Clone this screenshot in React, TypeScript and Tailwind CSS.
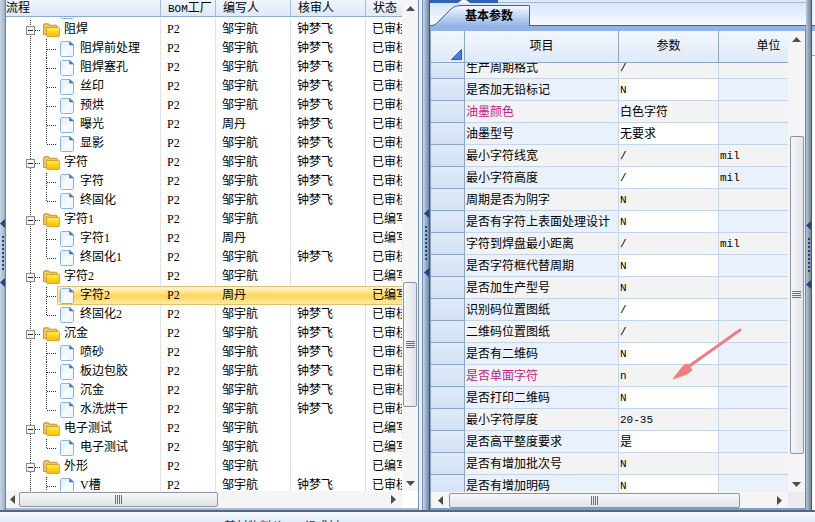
import { useState } from "react";
import clsx from "clsx";

type Kind = "folder" | "doc";

type ProcessRow = {
    id: number;
    kind: Kind;
    name: string;
    author: string;
    reviewer: string;
    status: string;
};

const ZOU = "邹宇航";
const ZHOU = "周丹";
const ZHONG = "钟梦飞";
const REVIEWED = "已审核";
const WRITTEN = "已编写";

const processData: [Kind, string, string, string, string][] = [
    ["folder", "阻焊", ZOU, ZHONG, REVIEWED],
    ["doc", "阻焊前处理", ZOU, ZHONG, REVIEWED],
    ["doc", "阻焊塞孔", ZOU, ZHONG, REVIEWED],
    ["doc", "丝印", ZOU, ZHONG, REVIEWED],
    ["doc", "预烘", ZOU, ZHONG, REVIEWED],
    ["doc", "曝光", ZHOU, ZHONG, REVIEWED],
    ["doc", "显影", ZOU, ZHONG, REVIEWED],
    ["folder", "字符", ZOU, ZHONG, REVIEWED],
    ["doc", "字符", ZOU, ZHONG, REVIEWED],
    ["doc", "终固化", ZOU, ZHONG, REVIEWED],
    ["folder", "字符1", ZOU, "", WRITTEN],
    ["doc", "字符1", ZHOU, "", WRITTEN],
    ["doc", "终固化1", ZOU, ZHONG, REVIEWED],
    ["folder", "字符2", ZOU, "", WRITTEN],
    ["doc", "字符2", ZHOU, "", WRITTEN],
    ["doc", "终固化2", ZOU, ZHONG, REVIEWED],
    ["folder", "沉金", ZOU, ZHONG, REVIEWED],
    ["doc", "喷砂", ZOU, ZHONG, REVIEWED],
    ["doc", "板边包胶", ZOU, ZHONG, REVIEWED],
    ["doc", "沉金", ZOU, ZHONG, REVIEWED],
    ["doc", "水洗烘干", ZOU, ZHONG, REVIEWED],
    ["folder", "电子测试", ZOU, "", WRITTEN],
    ["doc", "电子测试", ZOU, "", WRITTEN],
    ["folder", "外形", ZOU, "", WRITTEN],
    ["doc", "V槽", ZOU, ZHONG, REVIEWED],
];

const processRows: ProcessRow[] = processData.map(([kind, name, author, reviewer, status], id) => ({
    id,
    kind,
    name,
    author,
    reviewer,
    status,
}));

const params = [
    { name: "生产周期格式", value: "/", unit: "" },
    { name: "是否加无铅标记", value: "N", unit: "" },
    { name: "油墨颜色", value: "白色字符", unit: "", changed: true },
    { name: "油墨型号", value: "无要求", unit: "" },
    { name: "最小字符线宽", value: "/", unit: "mil" },
    { name: "最小字符高度", value: "/", unit: "mil" },
    { name: "周期是否为阴字", value: "N", unit: "" },
    { name: "是否有字符上表面处理设计", value: "N", unit: "" },
    { name: "字符到焊盘最小距离", value: "/", unit: "mil" },
    { name: "是否字符框代替周期", value: "N", unit: "" },
    { name: "是否加生产型号", value: "N", unit: "" },
    { name: "识别码位置图纸", value: "/", unit: "" },
    { name: "二维码位置图纸", value: "/", unit: "" },
    { name: "是否有二维码", value: "N", unit: "" },
    { name: "是否单面字符", value: "n", unit: "", changed: true },
    { name: "是否打印二维码", value: "N", unit: "" },
    { name: "最小字符厚度", value: "20-35", unit: "" },
    { name: "是否高平整度要求", value: "是", unit: "" },
    { name: "是否有增加批次号", value: "N", unit: "" },
    { name: "是否有增加明码", value: "N", unit: "" },
];

function FolderIcon() {
    return (
        <svg width="17" height="14" viewBox="0 0 17 14" className="shrink-0">
            <defs>
                <linearGradient id="folder-front" x1="0" y1="0" x2="0" y2="1">
                    <stop offset="0" stopColor="#fff04a" />
                    <stop offset="1" stopColor="#fdb900" />
                </linearGradient>
            </defs>
            <path d="M0.500 11.500V2L1.500 0.700h4L7 2.200h6.500L14.500 3.500v8z" fill="#e6b04a" stroke="#b98a35" strokeWidth="0.8" />
            <path d="M2 11V2.500h3L6.500 4h7" fill="none" stroke="#f8d98b" strokeWidth="0.9" />
            <rect x="3.500" y="4.500" width="13" height="9" rx="0.800" fill="url(#folder-front)" stroke="#d29a14" strokeWidth="0.8" />
        </svg>
    );
}

function DocIcon() {
    return (
        <svg width="14" height="16" viewBox="0 0 14 16" className="shrink-0">
            <defs>
                <linearGradient id="doc-sheet" x1="0" y1="0" x2="1" y2="1">
                    <stop offset="0" stopColor="#ddecfb" />
                    <stop offset="0.6" stopColor="#f8fcff" />
                    <stop offset="1" stopColor="#e6f2fd" />
                </linearGradient>
            </defs>
            <path d="M1.500 0.500h8.500l3.500 3.500v10.500l-1 1h-11l-1-1v-13z" fill="url(#doc-sheet)" stroke="#8ab4e6" />
            <path d="M9.500 0.500v3.500h4z" fill="#3b79c9" stroke="#3b79c9" strokeWidth="0.6" />
        </svg>
    );
}

// Dotted connector lines of one row; `odd` keeps the dots in step across 19px rows.
function Guides({ kind, odd, isFirst, isLast, collapsed }: { kind: Kind; odd: boolean; isFirst?: boolean; isLast?: boolean; collapsed?: boolean }) {
    const dash = { stroke: "#333", strokeDasharray: "1 1", strokeDashoffset: odd ? 1 : 0 };

    if (kind === "folder") {
        return (
            <svg width="37" height="19" viewBox="0 0 37 19" className="block shrink-0">
                <line x1="24.5" y1="0" x2="24.5" y2="19" {...dash} />
                <line x1="29" y1="10.5" x2="35" y2="10.5" stroke="#333" strokeDasharray="1 1" />
                <rect x="20.5" y="6.500" width="8" height="8" fill="#f4f4f4" stroke="#8b8b8b" />
                <path d={collapsed ? "M22 10.500h5M24.500 8v5" : "M22 10.500h5"} stroke="#222" />
            </svg>
        );
    }

    return (
        <svg width="51" height="19" viewBox="0 0 51 19" className="block shrink-0">
            <line x1="24.5" y1="0" x2="24.5" y2="19" {...dash} />
            <line x1="40.5" y1={isFirst ? -1 : 0} x2="40.5" y2={isLast ? 10 : 19} {...dash} />
            <line x1="41" y1="10.5" x2="50" y2="10.5" stroke="#333" strokeDasharray="1 1" />
        </svg>
    );
}

const arrowPaths = {
    up: "M4.500 2l4.500 5h-9z",
    down: "M4.500 7l4.500-5h-9z",
    left: "M2 4.500l5-4.500v9z",
    right: "M7 4.500l-5-4.500v9z",
};

function ScrollButton({ dir, label, width = "w-4" }: { dir: keyof typeof arrowPaths; label: string; width?: string }) {
    return (
        <button type="button" aria-label={label} className={clsx("flex h-4 shrink-0 items-center justify-center", width)}>
            <svg width="9" height="9" viewBox="0 0 9 9">
                <path d={arrowPaths[dir]} fill="#4d4d4d" />
            </svg>
        </button>
    );
}

function VerticalThumb() {
    return (
        <div className="flex h-full w-[14px] flex-col items-center justify-center gap-px rounded-xs border border-[#8e959f] bg-linear-to-r from-[#f6f7f9] to-[#dfe3ea]">
            {[0, 1, 2, 3].map((n) => (
                <span key={n} className="h-px w-[9px] bg-[#6d7178]" />
            ))}
        </div>
    );
}

function HorizontalThumb() {
    return (
        <div className="flex h-[15px] w-full items-center justify-center gap-px rounded-xs border border-[#8e959f] bg-linear-to-b from-[#f6f7f9] to-[#dfe3ea]">
            {[0, 1, 2, 3].map((n) => (
                <span key={n} className="h-[9px] w-px bg-[#6d7178]" />
            ))}
        </div>
    );
}

function Splitter({ className }: { className?: string }) {
    return (
        <div className={clsx("flex shrink-0 flex-col items-center justify-center gap-2", className)}>
            <svg width="5" height="9" viewBox="0 0 5 9">
                <path d="M5 0v9l-5-4.500z" fill="#24447e" />
            </svg>
            <div className="flex flex-col gap-0.5">
                {[0, 1, 2, 3, 4, 5, 6, 7, 8].map((n) => (
                    <span key={n} className="h-0.5 w-0.5 bg-[#24447e]" />
                ))}
            </div>
            <svg width="5" height="9" viewBox="0 0 5 9">
                <path d="M5 0v9l-5-4.500z" fill="#24447e" />
            </svg>
        </div>
    );
}

function ProcessPanel() {
    const [selected, setSelected] = useState(14);
    const [collapsed, setCollapsed] = useState<number[]>([]);

    const toggle = (id: number) =>
        setCollapsed((prev) => (prev.includes(id) ? prev.filter((n) => n !== id) : [...prev, id]));

    let parent = -1;
    const visible = processRows.filter((row) => {
        if (row.kind === "folder") {
            parent = row.id;
            return true;
        }
        return !collapsed.includes(parent);
    });

    const head = "h-[17px] border-b border-[#8fadd0] p-0 text-left font-normal";
    const headLine = "border-r border-r-[#a5bddb]";

    return (
        <section className="flex min-w-0 flex-[412] flex-col border-b-2 border-b-[#a9bbd6] bg-white">
            <div className="flex min-h-0 flex-1">
                <div className="min-w-0 flex-1 overflow-hidden">
                    <table className="w-[436px] table-fixed border-separate border-spacing-0 text-xs leading-[15px]">
                        <colgroup>
                            <col className="w-[155px]" />
                            <col className="w-[55px]" />
                            <col className="w-[75px]" />
                            <col className="w-[75px]" />
                            <col className="w-[76px]" />
                        </colgroup>
                        <thead className="bg-linear-to-b from-[#f0f6fe] to-[#dde8f7]">
                            <tr>
                                <th className={clsx(head, headLine)}>流程</th>
                                <th className={clsx(head, headLine, "pl-[7px] whitespace-nowrap")}>
                                    <span className="font-['Liberation_Mono',monospace] text-[11px] leading-none">BOM</span>工厂
                                </th>
                                <th className={clsx(head, headLine, "pl-[7px]")}>编写人</th>
                                <th className={clsx(head, headLine, "pl-[7px]")}>核审人</th>
                                <th className={clsx(head, "pl-[7px]")}>状态</th>
                            </tr>
                        </thead>
                        <tbody>
                            <tr aria-hidden="true">
                                <td className="border-r border-[#dfe3e8] p-0">
                                    <div className="flex h-[3px] items-end overflow-hidden pl-[54px]">
                                        <div className="pb-px">
                                            <DocIcon />
                                        </div>
                                    </div>
                                </td>
                                <td className="border-r border-[#dfe3e8] p-0" />
                                <td className="border-r border-[#dfe3e8] p-0" />
                                <td className="border-r border-[#dfe3e8] p-0" />
                                <td className="p-0" />
                            </tr>
                            {visible.map((row, i) => {
                                const active = row.id === selected;
                                const next = visible[i + 1];
                                const cell = clsx(
                                    "h-[19px] overflow-hidden py-0 pr-0 pl-1.5 whitespace-nowrap",
                                    active
                                        ? "border-y border-[#e3c070] bg-linear-to-b from-[#fff6d6] via-[#ffd557] to-[#ffeba0]"
                                        : "border-r border-[#dfe3e8]",
                                );

                                return (
                                    <tr key={row.id} aria-selected={active} onClick={() => setSelected(row.id)}>
                                        <td className={clsx("h-[19px] p-0", !active && "border-r border-[#dfe3e8]")}>
                                            <div className="flex h-[19px] items-center whitespace-nowrap">
                                                {row.kind === "folder" ? (
                                                    <button
                                                        type="button"
                                                        aria-label={`展开或折叠 ${row.name}`}
                                                        aria-expanded={!collapsed.includes(row.id)}
                                                        onClick={() => toggle(row.id)}
                                                    >
                                                        <Guides kind="folder" odd={i % 2 === 1} collapsed={collapsed.includes(row.id)} />
                                                    </button>
                                                ) : (
                                                    <Guides
                                                        kind="doc"
                                                        odd={i % 2 === 1}
                                                        isFirst={visible[i - 1]?.kind === "folder"}
                                                        isLast={next?.kind === "folder"}
                                                    />
                                                )}
                                                <div
                                                    className={clsx(
                                                        "flex h-[19px] flex-1 items-center",
                                                        row.kind === "folder" ? "gap-1" : "gap-1.5",
                                                        row.kind === "doc" && (active ? "pl-0.5" : "pl-[3px]"),
                                                        active &&
                                                            "rounded-l-xs border-y border-l border-[#e3c070] bg-linear-to-b from-[#fff6d6] via-[#ffd557] to-[#ffeba0]",
                                                    )}
                                                >
                                                    {row.kind === "folder" ? <FolderIcon /> : <DocIcon />}
                                                    <span>{row.name}</span>
                                                </div>
                                            </div>
                                        </td>
                                        <td className={cell}>P2</td>
                                        <td className={cell}>{row.author}</td>
                                        <td className={cell}>{row.reviewer}</td>
                                        <td className={clsx(cell, !active && "border-r-0")}>{row.status}</td>
                                    </tr>
                                );
                            })}
                        </tbody>
                    </table>
                </div>
                <div className="flex w-4 shrink-0 flex-col items-center bg-[#f5f5f6]">
                    <ScrollButton dir="up" label="向上滚动" />
                    <div className="flex-[265]" />
                    <div className="flex-[125]">
                        <VerticalThumb />
                    </div>
                    <div className="flex-[68]" />
                    <ScrollButton dir="down" label="向下滚动" />
                </div>
            </div>
            <div className="flex h-[17px] shrink-0 items-center bg-[#f5f5f6]">
                <ScrollButton dir="left" label="向左滚动" width="w-[13px]" />
                <div className="flex h-full min-w-0 flex-1 items-center">
                    <div className="flex-[199]">
                        <HorizontalThumb />
                    </div>
                    <div className="flex-[166]" />
                </div>
                <ScrollButton dir="right" label="向右滚动" width="w-[18px]" />
                <div className="h-full w-4 shrink-0 bg-white" />
            </div>
        </section>
    );
}

function ParameterGrid() {
    const head = "h-8 border-r border-b border-[#8ba6c6] p-0 text-center font-normal";
    const cell = "border-r border-b border-[#c3d5ed] py-0 pr-0 pl-px";
    const mono = "font-['Liberation_Mono','Noto_Sans_CJK_SC',monospace] text-[11px]";

    return (
        <div className="relative min-w-0 flex-1 overflow-hidden bg-[#e9f1fc]">
            <table className="w-[388px] table-fixed border-separate border-spacing-0 text-xs leading-[15px]">
                <colgroup>
                    <col className="w-[34px]" />
                    <col className="w-[154px]" />
                    <col className="w-[100px]" />
                    <col className="w-[100px]" />
                </colgroup>
                <thead className="bg-linear-to-b from-[#f2f7fe] to-[#deeaf8]">
                    <tr>
                        <th className={head} aria-label="全选">
                            <div className="flex h-[31px] items-end justify-end pr-0.5 pb-0.5">
                                <svg width="11" height="11" viewBox="0 0 11 11">
                                    <path d="M10.500 0.500v10h-10z" fill="#3f7fe0" stroke="#2a5caa" />
                                </svg>
                            </div>
                        </th>
                        <th className={head}>项目</th>
                        <th className={head}>参数</th>
                        <th className={head}>单位</th>
                    </tr>
                </thead>
                <tbody>
                    {params.map((param, i) => {
                        const shaded = i % 2 === 0;
                        // the first row is scrolled partly under the header
                        const box = clsx("flex flex-col justify-end overflow-hidden", i === 0 ? "h-[15px]" : "h-[21px]");
                        const text = "flex h-[21px] shrink-0 items-center pt-0.5 whitespace-nowrap";
                        const latin = /^[\x20-\x7e]+$/.test(param.value);

                        return (
                            <tr key={param.name}>
                                <td className="border-r border-b border-[#8ba6cc] bg-linear-to-b from-[#e0ebf8] to-[#d3e1f3] p-0" />
                                <td className={clsx(cell, shaded ? "bg-[#f3f3f3]" : "bg-[#e8f1fc]", param.changed && "text-[#c4208c]")}>
                                    <div className={box}>
                                        <span className={text}>{param.name}</span>
                                    </div>
                                </td>
                                <td className={clsx(cell, shaded ? "bg-[#f3f3f3]" : "bg-white")}>
                                    <div className={box}>
                                        <span className={clsx(text, latin && mono)}>{param.value}</span>
                                    </div>
                                </td>
                                <td className={clsx(cell, shaded ? "bg-[#f3f3f3]" : "bg-[#e8f1fc]")}>
                                    <div className={box}>
                                        <span className={clsx(text, mono)}>{param.unit}</span>
                                    </div>
                                </td>
                            </tr>
                        );
                    })}
                </tbody>
            </table>
            <svg width="72" height="56" viewBox="0 0 72 56" className="absolute top-[296px] left-[240px]">
                <path d="M69 3L17 40" stroke="#f07c80" strokeWidth="2.8" strokeLinecap="round" />
                <path d="M2 52L13 38L17 37L21 43L16 47z" fill="#f77d7d" stroke="#f77d7d" strokeLinejoin="round" />
            </svg>
        </div>
    );
}

function ParameterPanel() {
    return (
        <section className="flex min-w-0 flex-[376] flex-col">
            <div className="h-[3px] shrink-0 border-b border-[#a6b8d0] bg-[#dfeaf8]">
                <div className="flex h-[3px] w-[68px] justify-center bg-[#2f62b5]">
                    <svg width="12" height="3" viewBox="0 0 12 3">
                        <path d="M4 0h4l4 3h-12z" fill="#fff" />
                    </svg>
                </div>
            </div>
            <div role="tablist" className="flex h-[23px] shrink-0 items-end border-b border-[#3c6298] bg-linear-to-b from-[#d8e5fb] to-[#f8fbff]">
                <button type="button" role="tab" aria-selected="true" className="-mb-px flex h-[21px]">
                    <svg width="30" height="21" viewBox="0 0 30 21" className="shrink-0">
                        <defs>
                            <linearGradient id="tab-slope" x1="0" y1="0" x2="0" y2="1">
                                <stop offset="0" stopColor="#f4f8ff" />
                                <stop offset="1" stopColor="#94b5e8" />
                            </linearGradient>
                        </defs>
                        <path d="M0 21V20.500C5 20.500 6 19 9 16L21 4Q24.500 0.500 30 0.500V21z" fill="url(#tab-slope)" />
                        <path d="M0 20.500C5 20.500 6 19 9 16L21 4Q24.500 0.500 30 0.500" fill="none" stroke="#3c6298" />
                    </svg>
                    <span className="flex h-[21px] items-center rounded-tr-xs border-t border-r border-[#3c6298] bg-linear-to-b from-[#f4f8ff] to-[#94b5e8] pr-4 pl-[5px] text-xs leading-[15px] font-bold">
                        基本参数
                    </span>
                </button>
            </div>
            <div className="flex min-h-0 flex-1 flex-col border-t-[5px] border-r border-b-2 border-l border-t-[#92b3e6] border-r-[#5c86c4] border-b-[#7f9cc8] border-l-[#7f9fd0]">
                <div className="flex min-h-0 flex-1">
                    <ParameterGrid />
                    <div className="flex w-[17px] shrink-0 flex-col items-center bg-[#f5f5f6]">
                        <ScrollButton dir="up" label="向上滚动" />
                        <div className="flex-[89]" />
                        <div className="flex-[319]">
                            <VerticalThumb />
                        </div>
                        <div className="flex-[22]" />
                        <ScrollButton dir="down" label="向下滚动" />
                    </div>
                </div>
                <div className="flex h-4 shrink-0 items-center bg-[#f5f5f6]">
                    <ScrollButton dir="left" label="向左滚动" width="w-[18px]" />
                    <div className="flex h-full min-w-0 flex-1 items-center">
                        <div className="flex-[292]">
                            <HorizontalThumb />
                        </div>
                        <div className="flex-[30]" />
                    </div>
                    <ScrollButton dir="right" label="向右滚动" width="w-[18px]" />
                    <div className="h-full w-[17px] shrink-0 bg-[#ececee]" />
                </div>
            </div>
        </section>
    );
}

export default function App() {
    return (
        <div className="flex h-screen flex-col overflow-hidden bg-[#e8f1fb] font-['Liberation_Serif','Noto_Sans_CJK_SC',sans-serif] text-black">
            <main className="flex min-h-0 flex-1">
                <Splitter className="w-1.5 border-r border-[#6f8299] bg-linear-to-r from-[#c8d6e6] to-[#9fb1c6] pb-1" />
                <ProcessPanel />
                <div className="w-[5px] shrink-0 border-x border-[#6d8fc0] bg-[#eaf2fd]" />
                <Splitter className="w-[7px] border-r border-[#35598c] bg-linear-to-r from-[#cdd8e4] to-[#71879f] pb-6" />
                <ParameterPanel />
                <Splitter className="w-1.5 border-r border-[#35598c] bg-linear-to-r from-[#b9c6d6] to-[#71879f]" />
                <div className="flex w-[3px] shrink-0 flex-col bg-white">
                    <div className="h-[25px] bg-[#eaf2fd]" />
                    <div className="h-1.5 border-t border-[#3c6298] bg-[#92b3e6]" />
                    <div className="h-[25px] border-b border-[#8ba6c6] bg-[#eaf2fc]" />
                </div>
            </main>
            <footer className="h-3 shrink-0 overflow-hidden border-t-2 border-[#56687f] bg-linear-to-b from-[#f3f8fe] to-[#e0ecfa]">
                <div className="flex gap-5 pt-2 pl-[224px] text-xs leading-[15px] text-[#1b3a70]">
                    <span>基材物料价</span>
                    <span>组成材</span>
                </div>
            </footer>
        </div>
    );
}
